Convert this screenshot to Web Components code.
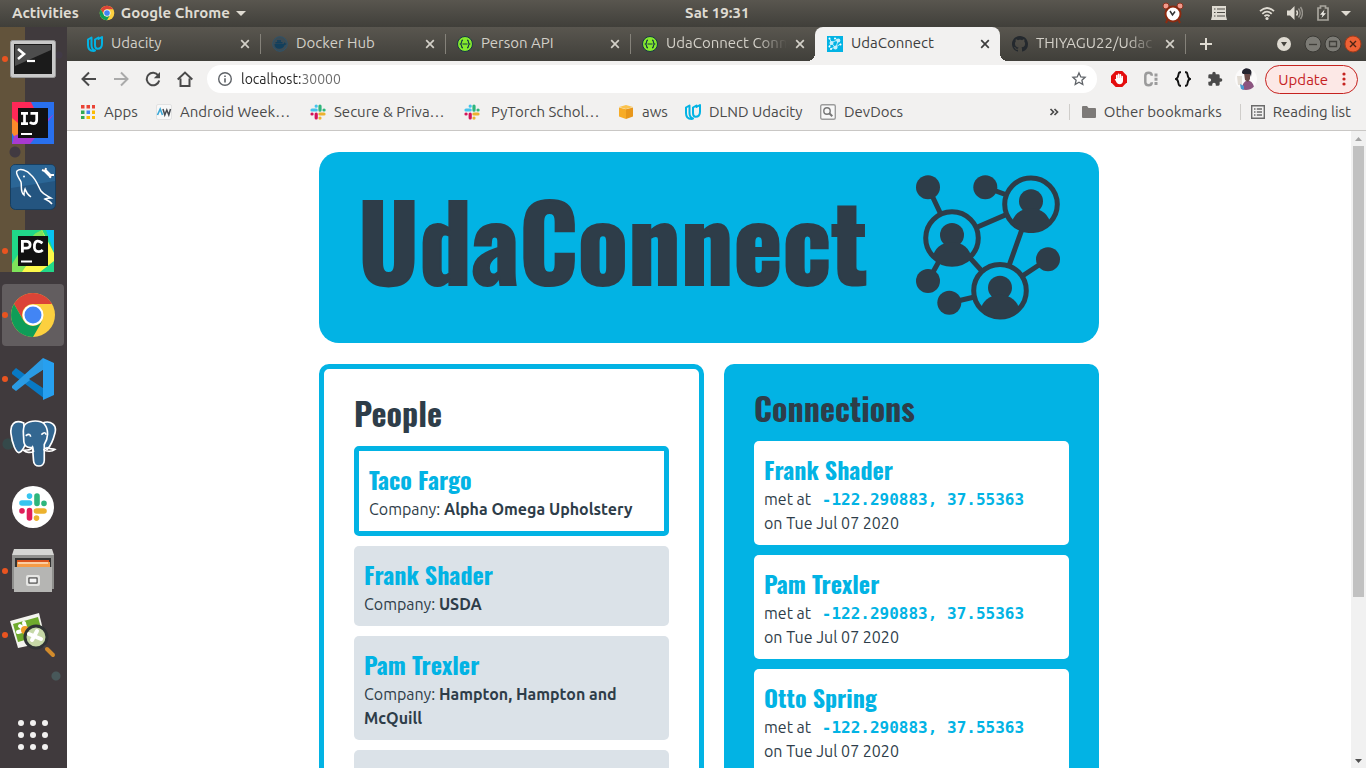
<!DOCTYPE html>
<html lang="en">
<head>
<meta charset="utf-8">
<title>UdaConnect</title>
<style>
  html, body { height: 100%; margin: 0; }
  body { font-family: Ubuntu, "Noto Sans", "Open Sans", sans-serif; font-size: 15px; overflow: hidden; }
</style>
</head>
<body>
<desktop-shell></desktop-shell>
<script>
const slackMark = `
  <g stroke-width="3.2" stroke-linecap="round" fill="none">
    <path stroke="#45c4ec" d="M2 6h4.2M6.2 2v.2"/><path stroke="#2eb67d" d="M10 2v4.2M14 6h.1"/>
    <path stroke="#ecb22e" d="M14 10H9.900M10 14v.1"/><path stroke="#d3145a" d="M6.200 14V10M2 10h.1"/>
  </g>`;
const chromeMark = `
  <circle cx="24" cy="24" r="22" fill="#fcd03f"/>
  <path fill="#db4437" d="M5 13A22 22 0 0 1 43 13H24a11 11 0 0 0-9.500 16.500z"/>
  <path fill="#0f9d58" d="M5 13A22 22 0 0 0 24 46l9.500-16.500a11 11 0 0 1-19 0z"/>
  <circle cx="24" cy="24" r="10.500" fill="#fff"/><circle cx="24" cy="24" r="8.500" fill="#4285f4"/>`;
const udacityMark = `<path fill="none" stroke="#02b3e4" stroke-width="2" stroke-linejoin="round" d="M4.500 1.500 1 3.500V9c0 4 2.500 6 5.500 6 1 0 1.500-.5 1.500-.5C5 13.500 4.500 11.500 4.500 9zM11.500 1.500 8 3.500V9c0 2.500.5 3.800 2.500 3.800 3 0 4.500-2 4.500-5V1L11.500 3z"/>`;
const swagger = `<circle cx="8" cy="8" r="7.500" fill="#85ea2d" stroke="#173647"/><path fill="none" stroke="#173647" stroke-width="1.200" d="M6 4.200c-2.500 0-.5 3-2.500 3.800C5.500 9 3.500 11.800 6 11.800M10 4.200c2.500 0 .5 3 2.500 3.800-2 1 0 3.800-2.500 3.800M5.500 8h5"/>`;
const caret = `<path fill="currentColor" d="M0 5h10l-5 5z"/>`;

const ICONS = {
  chrome: ['0 0 48 48', chromeMark],
  caret: ['0 0 10 15', caret],
  slack: ['0 0 16 16', slackMark],
  udacity: ['0 0 16 16', udacityMark],
  swagger: ['0 0 16 16', swagger],
  docker: ['0 0 16 16', `<circle cx="8" cy="8" r="7.300" fill="#3b4b54" stroke="#2f536a"/><path fill="#123f5c" d="M2.500 8h9c.3-1 .8-1.600 1.200-1.800l.8 1.300 1 .3c-.4 1-1.200 1-1.700 1-1 2.500-2.800 4-5.500 4-3.200 0-4.800-2-4.800-4.800zM3.500 6h7v1.500h-7zM5 4.300h4v1.400H5z"/>`],
  network: ['0 0 16 16', `<path fill="#02b3e4" d="M0 0h16v16H0z"/><path fill="none" stroke="#fff" stroke-width=".7" d="M2.500 2.500l2 4 6-2.500-2-1.500M11 5L9 11l4.500-3M4 12.500l4-1L4.500 7 2.500 10"/><g fill="#c8effa"><circle cx="11.300" cy="4.500" r="2"/><circle cx="4.500" cy="7" r="2"/><circle cx="8.500" cy="11.500" r="2"/></g><g fill="#fff"><circle cx="2.500" cy="2.500" r="1"/><circle cx="8" cy="2.500" r="1"/><circle cx="13.500" cy="8.500" r="1"/><circle cx="2.500" cy="10.500" r="1"/><circle cx="4" cy="13" r="1"/></g>`],
  github: ['0 0 16 16', `<path fill="#24292e" d="M8 0C3.580 0 0 3.580 0 8c0 3.540 2.290 6.530 5.470 7.590.4.070.55-.17.55-.38 0-.19-.01-.82-.01-1.490-2.010.37-2.530-.49-2.690-.94-.09-.23-.48-.94-.82-1.130-.28-.15-.68-.52-.01-.53.63-.01 1.080.58 1.230.82.72 1.210 1.870.87 2.330.66.07-.52.28-.87.51-1.070-1.780-.2-3.640-.89-3.640-3.950 0-.87.31-1.590.82-2.150-.08-.2-.36-1.020.08-2.120 0 0 .67-.21 2.200.82.64-.18 1.320-.27 2-.27s1.360.09 2 .27c1.530-1.040 2.200-.82 2.200-.82.44 1.100.16 1.920.08 2.120.51.56.82 1.270.82 2.150 0 3.070-1.870 3.750-3.650 3.950.29.25.54.73.54 1.480 0 1.070-.01 1.930-.01 2.200 0 .21.15.46.55.38A8.010 8.010 0 0 0 16 8c0-4.420-3.580-8-8-8z"/>`],
  close: ['0 0 10 10', `<path stroke="currentColor" stroke-width="1.700" d="M1.200 1.200l7.600 7.600M8.800 1.200L1.200 8.800"/>`],
  plus: ['0 0 14 14', `<path stroke="currentColor" stroke-width="2" d="M7 1v12M1 7h12"/>`],
  tabsearch: ['0 0 14 14', `<circle cx="7" cy="7" r="7" fill="#dfdbd2"/><path fill="#45433d" d="M4 5h6L7 9.500z"/>`],
  winmin: ['0 0 18 18', `<circle cx="9" cy="9" r="8" fill="#7c7b75" stroke="#3a3934"/><path stroke="#403f3a" stroke-width="1.300" d="M5 9.500h8"/>`],
  winmax: ['0 0 18 18', `<circle cx="9" cy="9" r="8" fill="#7c7b75" stroke="#3a3934"/><path fill="none" stroke="#403f3a" stroke-width="1.300" d="M5.500 6.500h7v5h-7z"/>`],
  winclose: ['0 0 18 18', `<circle cx="9" cy="9" r="8" fill="#ed6135" stroke="#a63b19"/><path stroke="#4a2415" stroke-width="1.400" d="M6 6l6 6M12 6l-6 6"/>`],
  back: ['0 0 16 16', `<path fill="none" stroke="#4a4a4a" stroke-width="2" d="M15 8H2.500M8 1.500L1.500 8 8 14.500"/>`],
  forward: ['0 0 16 16', `<path fill="none" stroke="#aaa" stroke-width="2" d="M1 8h12.500M8 1.500L14.500 8 8 14.500"/>`],
  reload: ['0 0 16 16', `<path fill="none" stroke="#4a4a4a" stroke-width="2" d="M13.300 4.500A6.300 6.300 0 1 0 14.200 9.500"/><path fill="#4a4a4a" d="M15 1v6.200H8.800z"/>`],
  home: ['0 0 16 16', `<path fill="none" stroke="#4a4a4a" stroke-width="2" d="M.7 8.500L8 1.600l7.300 6.900M3.500 7.500V15h9V7.500"/>`],
  info: ['0 0 14 14', `<circle cx="7" cy="7" r="6.300" fill="none" stroke="#5f6368" stroke-width="1.400"/><path stroke="#5f6368" stroke-width="1.600" d="M7 6.200v4.300M7 3.500v1.500"/>`],
  star: ['0 0 16 16', `<path fill="none" stroke="#5f6368" stroke-width="1.300" d="M8 1.900l1.800 4 4.300.4-3.200 2.900.9 4.300L8 11.300l-3.800 2.200.9-4.300L1.900 6.300l4.300-.4z"/>`],
  adblock: ['0 0 16 16', `<path fill="#e40d0d" d="M4.700 0h6.600L16 4.700v6.600L11.300 16H4.700L0 11.300V4.700z"/><path stroke="#fff" stroke-width="1.600" stroke-linecap="round" d="M5.800 8V4.500M7.600 7.500V3.300M9.400 7.500V3.800M11.200 8V5.500"/><path fill="#fff" d="M5 7h7v3c0 2-1.500 3.200-3.200 3.200-2 0-3-1-4-3.200L3.600 8.200 5 8z"/>`],
  cdots: ['0 0 16 16', `<path fill="none" stroke="#9b9b9b" stroke-width="2.500" d="M8.800 4.800c0-4-6.500-4-6.500 0v6.400c0 4 6.500 4 6.500 0"/><path fill="#9b9b9b" d="M11.500 2.500h3v3h-3zM11.500 6.700h3v3h-3zM11.500 11h3v3h-3z"/>`],
  braces: ['0 0 16 16', `<path fill="none" stroke="#111" stroke-width="1.900" d="M6 1.200H5C2.500 1.200 4.500 7 1 8c3.500 1 1.500 6.800 4 6.800h1M10 1.200h1c2.500 0 .5 5.800 4 6.800-3.500 1-1.500 6.800-4 6.800h-1"/>`],
  puzzle: ['0 0 24 24', `<path fill="#4a4a4a" d="M20.500 11H19V7a2 2 0 0 0-2-2h-4V3.500a2.500 2.500 0 0 0-5 0V5H4a2 2 0 0 0-2 2v3.800h1.500a2.700 2.700 0 0 1 0 5.400H2V20a2 2 0 0 0 2 2h3.800v-1.500a2.700 2.700 0 0 1 5.400 0V22H17a2 2 0 0 0 2-2v-4h1.500a2.500 2.500 0 0 0 0-5z"/>`],
  avatar: ['0 0 22 22', `<clipPath id="a"><circle cx="11" cy="11" r="11"/></clipPath><g clip-path="url(#a)"><path fill="#fbfafa" d="M0 0h22v22H0z"/><path fill="#e2dcd4" d="M2 8h5v9H3z"/><path fill="#8b5580" d="M7 22c0-6 2-9 6-9.500 4 .5 6 4 6.500 9.500z"/><path fill="#4a9ad0" d="M5 16l4 2v4H6z"/><path fill="#6b4a48" d="M9 5h6v6l-2 3-3-2z"/><path fill="#25242f" d="M7 5c0-6 9-6 9.500-1L16 9l-1-3H8z"/></g>`],
  kebab: ['0 0 4 14', `<g fill="#c5221f"><circle cx="2" cy="2" r="1.600"/><circle cx="2" cy="7" r="1.600"/><circle cx="2" cy="12" r="1.600"/></g>`],
  apps: ['0 0 16 16', `<path fill="#ea4335" d="M1 1h3.500v3.500H1zM6.500 1H10v3.500H6.500zM12 1h3v3.500h-3z"/><path fill="#34a853" d="M1 6.500h3.500V10H1zM1 12h3.500v3H1z"/><path fill="#4285f4" d="M6.500 6.500H10V10H6.500z"/><path fill="#fbbc04" d="M12 6.500h3V10h-3zM6.500 12H10v3H6.500zM12 12h3v3h-3z"/>`],
  aw: ['0 0 16 16', `<rect x=".5" y=".5" width="15" height="15" rx="1.500" fill="#f8f8f8" stroke="#e2e2e2"/><path fill="none" stroke="#3ba7d6" stroke-width="1.600" d="M1.500 11l2.700-6 2.300 6"/><path fill="none" stroke="#454a50" stroke-width="1.500" d="M7 5l1.800 6 2-5 2 5L14.500 5"/>`],
  aws: ['0 0 16 16', `<path fill="#f7ac27" d="M1 3.500l7 1.700V15l-7-2.500z"/><path fill="#e8971b" d="M15 3.500L8 5.200V15l7-2.500z"/><path fill="#fbc34e" d="M8 1l7 2-7 2-7-2z"/>`],
  devdocs: ['0 0 16 16', `<rect x=".7" y=".7" width="14.600" height="14.600" rx="1.500" fill="#f8f8f8" stroke="#9c9c9c" stroke-width="1.400"/><circle cx="7" cy="7" r="3.200" fill="none" stroke="#777" stroke-width="1.400"/><path stroke="#777" stroke-width="2" d="M9.300 9.300l3 3"/>`],
  more: ['0 0 10 10', `<path fill="none" stroke="#4a4a4a" stroke-width="1.700" d="M1.500 2L4.500 5l-3 3M5.500 2l3 3-3 3"/>`],
  folder: ['0 0 14 12', `<path fill="#7d7a78" d="M0 1a1 1 0 0 1 1-1h4l1.500 2H13a1 1 0 0 1 1 1v8a1 1 0 0 1-1 1H1a1 1 0 0 1-1-1z"/>`],
  reading: ['0 0 14 14', `<path fill="none" stroke="#6b6b6b" stroke-width="1.400" d="M.7.7h12.600v12.600H.7z"/><path stroke="#6b6b6b" stroke-width="1.300" d="M3 4h1.500M3 7h1.500M3 10h1.500M5.800 4H11M5.800 7H11M5.800 10H11"/>`],
  alarm: ['0 0 22 22', `<circle cx="4" cy="4" r="3" fill="#f29a8c" stroke="#8b3320"/><circle cx="18" cy="4" r="3" fill="#f29a8c" stroke="#8b3320"/><path stroke="#8b2a10" stroke-width="2" d="M6 17l-2 4M16 17l2 4"/><circle cx="11" cy="12" r="7.500" fill="#fff" stroke="#8b2a10" stroke-width="2"/><path fill="none" stroke="#333" stroke-width="1.500" d="M8 9l2.500 4L13 9.500"/>`],
  list: ['0 0 16 16', `<path fill="#dfdbd2" d="M1 1h14v10l1 4H0l1-4z"/><path stroke="#4e4c46" stroke-width="1.200" d="M3 4h1.500M3 7.500h1.500M3 11h1.500M6 4h8M6 7.500h8M6 11h8"/>`],
  wifi: ['0 0 16 16', `<g fill="none" stroke="#dfdbd2" stroke-width="1.800"><path d="M1 6.200q7-6.500 14 0M3.300 8.800q4.700-4.300 9.400 0M5.500 11.200q2.500-2.200 5 0"/></g><circle cx="8" cy="13.500" r="1.600" fill="#dfdbd2"/>`],
  volume: ['0 0 16 16', `<path fill="#dfdbd2" d="M0 5.500h3L7.500 1v14L3 10.500H0z"/><path fill="none" stroke="#dfdbd2" stroke-width="1.400" d="M9.500 5.500q2 2.500 0 5"/><path fill="none" stroke="#98958e" stroke-width="1.400" d="M11.500 3.500q3.400 4.500 0 9M13.500 2q4 6 0 12"/>`],
  battery: ['0 0 12 16', `<path fill="none" stroke="#a8a59d" stroke-width="1.700" d="M1 3h2.500V1h5v2H11v12H1z"/><path fill="#eeece6" d="M7.500 4.500L3 9.700h2.500L4.500 13 9 8.200H6.500z"/>`],
  terminal: ['0 0 46 38', `<rect x=".5" y=".5" width="45" height="37" rx="2" fill="#c9c9c9" stroke="#9a9a9a"/><rect x="4" y="4" width="38" height="30" fill="#1b1b1b"/><path fill="#4d4d4d" d="M5 5h36v5L5 26z"/><path fill="none" stroke="#fff" stroke-width="2.600" d="M8 9l6 5-6 5"/><path stroke="#fff" stroke-width="2.200" d="M17 21h8"/>`],
  intellij: ['0 0 42 42', `<path fill="#2970ee" d="M0 0h42v42H0z"/><path fill="#fe2857" d="M0 0h19l6 12L10 30 0 16z"/><path fill="#fb8a2a" d="M0 16l12 10L3 36l-3-5z"/><path fill="#a83ad0" d="M42 12L30 22 2 34l-2 8h18z"/><path fill="#111" d="M6 6h30v30H6z"/><path stroke="#fff" stroke-width="2" d="M9 32h11"/><path fill="none" stroke="#fff" stroke-width="2.700" d="M9 11.300h7M12.500 11v11M9 21.700h7M18.500 11.300h6.200V18q0 3.700-3.400 3.700-2 0-3.400-1.500"/>`],
  mysql: ['0 0 46 46', `<rect x=".5" y=".5" width="45" height="45" rx="5" fill="#245580" stroke="#173e5f"/><path fill="#2b6696" d="M5 1h36q4 0 4 4v12L1 24V5q0-4 4-4z"/><path fill="none" stroke="#fff" stroke-width="1.500" d="M21 33c-3-2-5-5-6-8-1 2-1 4-1 6-4-3-2-9-3-13C9 14 5 9 7 7c3-3 10-1 14 4 5 4 7 11 10 16 3 4 7 5 10 7-3 0-4 0-6 1 2 1 5 2 7 5"/><circle cx="14" cy="12.500" r="1" fill="#fff"/><path stroke="#fff" stroke-width="3.400" stroke-linecap="round" d="M35 6.500l5 5"/><path stroke="#fff" stroke-width="2" d="M32 6l3 1 1-3M40 14l1-3 3 0"/>`],
  pycharm: ['0 0 42 42', `<path fill="#21d789" d="M0 0h42v42H0z"/><path fill="#07c3f2" d="M34 0h8v22z"/><path fill="#fcf84a" d="M30 0l2 4 10 19v8L28 42H6l12-32z"/><path fill="#7ee35a" d="M0 34l18-28L30 0l3 8L10 42H0z"/><path fill="#21d789" d="M0 0h26L0 30z"/><path fill="#111" d="M6 6h30v30H6z"/><path stroke="#fff" stroke-width="2" d="M9 31.500h11"/><path fill="none" stroke="#fff" stroke-width="2.800" d="M10.400 22.500V11.300h4q3.700 0 3.700 3.400t-3.700 3.400h-4M30.500 13.200Q24 8.500 22.500 14.500 21.500 22 27 21.700q2 0 3.700-1.700"/>`],
  vscode: ['0 0 42 42', `<path fill="#0879c4" d="M0 14l4-4 29 21v10L0 16z"/><path fill="#2a9be4" d="M0 28L31 0v12L4 33l-4-3z"/><path fill="#27a0f0" d="M31 0l11 5v32l-11 5z"/><path fill="#403a3d" d="M31 12v18L17 21z"/>`],
  postgres: ['0 0 48 50', `<g fill="#336791" stroke="#fff" stroke-width="1.700"><path d="M14 4C4 0 0 6 1 15s5 21 9 19 5-6 6-10zM33 4c9-3 15 2 13 10s-5 14-8 17l-5-3z"/><path d="M16 5c5-4 15-4 19 0 5 6 4 15 0 21v16c0 8-11 8-11 0l-1-13c-5 1-9-1-9-8 0-6-2-13 2-16z"/><path fill="none" d="M34 31c4 3 9 2 12 0-2-1-7 0-9-2M14 32c2 2 7 3 10 1l-1-4c-2 4-6 2-9 3zM32 16q4-4 5 0M16 17q5-3 5 1"/></g>`],
  slackapp: ['0 0 42 42', `<circle cx="21" cy="21" r="21" fill="#fff"/><g stroke-width="5.600" stroke-linecap="round"><path stroke="#36c5f0" d="M10 17h7.500M17.500 10v.1"/><path stroke="#2eb67d" d="M25 10v7.500M32 17.500v-.1"/><path stroke="#ecb22e" d="M24.500 25H32M24.500 32v.1"/><path stroke="#e01e5a" d="M17.500 24.500V32M10 25v-.1"/></g>`],
  files: ['0 0 42 44', `<path fill="#d5d5d3" d="M2 0h38l2 6v14H0V6z"/><path fill="#8f8f8d" d="M0 6h42v34H0z"/><path fill="#333" d="M3 9h36v11H3z"/><path fill="#d9531e" d="M5 11h32v9H5z"/><path fill="#f59b46" d="M5 13h33v7H5z"/><path stroke="#fff" d="M6 14h30"/><path fill="#b5b5b3" d="M2 18h38v25H2z"/><rect x="15" y="27" width="12" height="9" rx="1" fill="none" stroke="#e6e6e4" stroke-width="2"/><path fill="#f5f5f5" stroke="#444" d="M17 29h8v5h-8z"/>`],
  images: ['0 0 46 46', `<path fill="#f4f4ef" d="M0 9L29 1l7 29-28 6z"/><path fill="#6fab2d" d="M3 12l25-7 5 18-25 7z"/><path stroke="#fff" stroke-width="4" stroke-linecap="round" d="M10 14l11 9M8 20l15-4M14 11l4 15"/><circle cx="15" cy="18" r="4" fill="#ef9c25"/><circle cx="26" cy="25" r="11" fill="#c5d8a7" stroke="#2f3335" stroke-width="3"/><path stroke="#fff" stroke-width="4" stroke-linecap="round" d="M19 22l12 5M22 28l5-9"/><path stroke="#444" stroke-width="3" d="M34 34l3 3"/><path stroke="#d28b2c" stroke-width="4" stroke-linecap="round" d="M37 37l6 6"/>`],
  grid: ['0 0 30 30', `<g fill="#f2f1f0"><circle cx="3" cy="3" r="3"/><circle cx="15" cy="3" r="3"/><circle cx="27" cy="3" r="3"/><circle cx="3" cy="15" r="3"/><circle cx="15" cy="15" r="3"/><circle cx="27" cy="15" r="3"/><circle cx="3" cy="27" r="3"/><circle cx="15" cy="27" r="3"/><circle cx="27" cy="27" r="3"/></g>`],
  people: ['916 175 144 145', `
    <defs><clipPath id="p"><circle r="28"/></clipPath>
    <g id="person"><circle r="26.300" fill="#02b3e4" stroke="#2e3d49" stroke-width="5"/><circle cy="-3" r="12"/><ellipse cy="20" rx="19" ry="16" clip-path="url(#p)"/></g></defs>
    <path fill="none" stroke="#2e3d49" stroke-width="5" d="M928 187l24 51 79-34-46-17M1031 204l-31 87 48-32M949 303l51-12-48-53-24 43"/>
    <g fill="#2e3d49"><circle cx="928" cy="187.300" r="12"/><circle cx="985.300" cy="187.300" r="12"/><circle cx="1048" cy="259.300" r="12"/><circle cx="928" cy="281" r="12"/><circle cx="949.300" cy="302.700" r="12"/>
    <use href="#person" x="952" y="238"/><use href="#person" x="1031" y="204.300"/><use href="#person" x="1000" y="290.700"/></g>`],
};

function define(name, html, setup) {
  const template = document.createElement('template');
  template.innerHTML = html;
  customElements.define(name, class extends HTMLElement {
    constructor() {
      super();
      this.attachShadow({ mode: 'open' }).append(template.content.cloneNode(true));
    }
    connectedCallback() { if (setup) setup(this, this.shadowRoot); }
  });
}

/* <ui-icon name w h> */
define('ui-icon', `<style>:host{display:inline-flex;flex:none}svg{display:block}</style><span></span>`, (el, root) => {
  const [box, body] = ICONS[el.getAttribute('name')];
  const w = el.getAttribute('w') || 16, h = el.getAttribute('h') || w;
  root.querySelector('span').innerHTML = `<svg viewBox="${box}" width="${w}" height="${h}" aria-hidden="true">${body}</svg>`;
});

define('top-panel', `
<style>
  :host { display: grid; grid-template-columns: 685px 1fr auto; align-items: center; box-sizing: border-box; height: 27px; padding-bottom: 1px; flex: none;
    background: linear-gradient(#59564f, #403f3a); color: #dfdbd2; font-weight: bold; font-size: 15px; line-height: 24px; }
  button { all: unset; display: flex; align-items: center; gap: 6px; }
  .left { display: flex; gap: 20px; padding-left: 12px; }
  .right { display: flex; align-items: center; padding-right: 15px; }
  .status { display: flex; align-items: center; gap: 12px; margin-left: 32px; }
  .battery { margin-left: 2px; }
  .list { margin-left: 27px; display: flex; }
</style>
<div class="left"><button>Activities</button><button><ui-icon name="chrome"></ui-icon>Google Chrome <ui-icon name="caret" w="10" h="15"></ui-icon></button></div>
<button>Sat 19:31</button>
<div class="right">
  <ui-icon name="alarm" w="22"></ui-icon><span class="list"><ui-icon name="list"></ui-icon></span>
  <button class="status" aria-label="System menu"><ui-icon name="wifi"></ui-icon><ui-icon name="volume"></ui-icon><ui-icon class="battery" name="battery" w="12" h="16"></ui-icon><ui-icon name="caret" w="10" h="15"></ui-icon></button>
</div>`);

define('dock-item', `
<style>
  :host { display: block; height: 64px; flex: none; }
  button { all: unset; box-sizing: border-box; position: relative; display: flex; align-items: center; justify-content: center;
    width: 62px; height: 62px; margin: 0 2px; border-radius: 4px; }
  :host([active]) button { background: #625d5f; }
  :host([running]) button::before { content: ""; position: absolute; left: 0; top: 28px; width: 6px; height: 6px; border-radius: 50%; background: #e95420; }
</style>
<button><slot></slot></button>`, (el, root) => root.querySelector('button').setAttribute('aria-label', el.getAttribute('label')));

define('app-dock', `
<style>
  :host { display: flex; flex-direction: column; box-sizing: border-box; width: 67px; flex: none; padding-top: 1px;
    background:
      radial-gradient(circle at 15px 125px, #413a41 5px, transparent 6px),
      radial-gradient(circle at 56px 649px, #48585a 4px, transparent 5px),
      radial-gradient(circle at 8px 417px, #35494a 5px, transparent 6px),
      radial-gradient(circle at 59px 28px, #413a46 3px, transparent 4px),
      linear-gradient(#62533b, #62533b) 0 0 / 25px 245px no-repeat,
      #403a3d; }
  .grow { flex: 1; }
</style>
<dock-item label="Terminal" running><ui-icon name="terminal" w="46" h="38"></ui-icon></dock-item>
<dock-item label="IntelliJ IDEA"><ui-icon name="intellij" w="42"></ui-icon></dock-item>
<dock-item label="MySQL Workbench"><ui-icon name="mysql" w="46"></ui-icon></dock-item>
<dock-item label="PyCharm" running><ui-icon name="pycharm" w="42"></ui-icon></dock-item>
<dock-item label="Google Chrome" running active><ui-icon name="chrome" w="48"></ui-icon></dock-item>
<dock-item label="Visual Studio Code" running><ui-icon name="vscode" w="42"></ui-icon></dock-item>
<dock-item label="pgAdmin"><ui-icon name="postgres" w="47" h="49"></ui-icon></dock-item>
<dock-item label="Slack"><ui-icon name="slackapp" w="42"></ui-icon></dock-item>
<dock-item label="Files" running><ui-icon name="files" w="42" h="44"></ui-icon></dock-item>
<dock-item label="Image Viewer" running><ui-icon name="images" w="46"></ui-icon></dock-item>
<div class="grow"></div>
<dock-item label="Show Applications"><ui-icon name="grid" w="30"></ui-icon></dock-item>`);

define('browser-tab', `
<style>
  :host { display: flex; align-items: center; box-sizing: border-box; flex: 0 1 185px; min-width: 0; height: 34px;
    padding: 0 10px 0 12px; gap: 8px; position: relative; color: #d3d0c8; font-size: 15px; }
  :host::after { content: ""; position: absolute; right: -1px; top: 7px; width: 1px; height: 20px; background: #85827a; }
  :host([active]) { background: #f2f1f0; color: #3d3d3d; border-radius: 8px 8px 0 0; z-index: 1; }
  :host([active])::after, :host([active])::before { content: ""; position: absolute; background: radial-gradient(circle at 0 0, transparent 8px, #f2f1f0 8px); width: 8px; height: 8px; top: 26px; left: -8px; }
  :host([active])::after { background: radial-gradient(circle at 100% 0, transparent 8px, #f2f1f0 8px); left: auto; right: -8px; }
  button { all: unset; display: flex; }
  .title { flex: 1; min-width: 0; overflow: hidden; white-space: nowrap; line-height: 20px; padding-bottom: 2px; }
  :host([long]) .title { -webkit-mask-image: linear-gradient(90deg, #000 75%, transparent); mask-image: linear-gradient(90deg, #000 75%, transparent); }
</style>
<slot name="icon"></slot><button class="title" role="tab"><slot></slot></button><button aria-label="Close tab"><ui-icon name="close" w="10"></ui-icon></button>`);

define('tab-strip', `
<style>
  :host { display: flex; align-items: center; height: 34px; padding: 0 4px 0 8px; background: linear-gradient(#59564f, #403f3a); color: #dfdbd2; }
  button { all: unset; display: flex; }
  .new { margin-left: 14px; }
  .controls { display: flex; align-items: center; gap: 2px; margin-left: auto; }
  .search { margin-right: 11px; }
</style>
<browser-tab><ui-icon slot="icon" name="udacity"></ui-icon>Udacity</browser-tab>
<browser-tab><ui-icon slot="icon" name="docker"></ui-icon>Docker Hub</browser-tab>
<browser-tab><ui-icon slot="icon" name="swagger"></ui-icon>Person API</browser-tab>
<browser-tab long><ui-icon slot="icon" name="swagger"></ui-icon>UdaConnect Conn</browser-tab>
<browser-tab active><ui-icon slot="icon" name="network"></ui-icon>UdaConnect</browser-tab>
<browser-tab long><ui-icon slot="icon" name="github"></ui-icon>THIYAGU22/Udac</browser-tab>
<button class="new" aria-label="New tab"><ui-icon name="plus" w="14"></ui-icon></button>
<div class="controls">
  <button class="search" aria-label="Search tabs"><ui-icon name="tabsearch" w="14"></ui-icon></button>
  <button aria-label="Minimize"><ui-icon name="winmin" w="18"></ui-icon></button>
  <button aria-label="Maximize"><ui-icon name="winmax" w="18"></ui-icon></button>
  <button aria-label="Close"><ui-icon name="winclose" w="18"></ui-icon></button>
</div>`);

define('nav-toolbar', `
<style>
  :host { display: flex; align-items: center; gap: 16px; height: 36px; padding: 0 8px 0 14px; background: #f2f1f0; }
  button { all: unset; display: flex; }
  form { flex: 1; min-width: 0; display: flex; align-items: center; gap: 9px; box-sizing: border-box; height: 28px; margin: 0 -2px 0 -2px; padding: 0 10px 0 11px; border-radius: 14px; background: #fff; }
  input { flex: 1; min-width: 0; border: 0; outline: 0; padding: 0; font: inherit; font-size: 14px; color: transparent;
    background: linear-gradient(90deg, #222 60px, #696969 60px); -webkit-background-clip: text; background-clip: text; }
  .avatar { margin: 0 -8px 0 -4px; }
  .update { box-sizing: border-box; height: 29px; padding: 0 11px 0 12px; gap: 14px; align-items: center; border: 1px solid #c5221f; border-radius: 15px; background: #fce8e6; color: #c5221f; font-size: 15px; }
</style>
<button aria-label="Back"><ui-icon name="back"></ui-icon></button>
<button aria-label="Forward"><ui-icon name="forward"></ui-icon></button>
<button aria-label="Reload"><ui-icon name="reload"></ui-icon></button>
<button aria-label="Home"><ui-icon name="home"></ui-icon></button>
<form><ui-icon name="info" w="14"></ui-icon><input aria-label="Address" value="localhost:30000"><button type="button" aria-label="Bookmark this page"><ui-icon name="star"></ui-icon></button></form>
<button aria-label="Ad blocker"><ui-icon name="adblock"></ui-icon></button>
<button aria-label="Extension"><ui-icon name="cdots"></ui-icon></button>
<button aria-label="Formatter"><ui-icon name="braces"></ui-icon></button>
<button aria-label="Extensions"><ui-icon name="puzzle"></ui-icon></button>
<button class="avatar" aria-label="Profile"><ui-icon name="avatar" w="22"></ui-icon></button>
<button class="update">Update<ui-icon name="kebab" w="4" h="14"></ui-icon></button>`);

define('bookmark-link', `
<style>
  :host { display: block; min-width: 0; }
  a { display: flex; align-items: center; gap: 8px; color: #4a4a4a; text-decoration: none; white-space: nowrap; }
</style>
<a href="#"><slot name="icon"></slot><span><slot></slot></span></a>`);

define('bookmarks-bar', `
<style>
  :host { display: flex; align-items: center; box-sizing: border-box; height: 34px; padding: 0 15px 4px 13px; background: #f2f1f0; border-bottom: 1px solid #c9c7c5; font-size: 15px; line-height: 28px; }
  nav { display: grid; grid-template-columns: 76px 154px 154px 154px 67px 135px auto; flex: 1; }
  .wide { margin-right: 3px; }
  .side { display: flex; align-items: center; gap: 10px; }
  .folder { margin: 0 8px 0 2px; }
  button { all: unset; display: flex; }
  i { width: 1px; height: 16px; background: #cfcdca; }
</style>
<nav aria-label="Bookmarks">
  <bookmark-link><ui-icon slot="icon" name="apps"></ui-icon>Apps</bookmark-link>
  <bookmark-link><ui-icon slot="icon" name="aw"></ui-icon>Android Week…</bookmark-link>
  <bookmark-link><ui-icon slot="icon" name="slack"></ui-icon>Secure &amp; Priva…</bookmark-link>
  <bookmark-link><ui-icon class="wide" slot="icon" name="slack"></ui-icon>PyTorch Schol…</bookmark-link>
  <bookmark-link><ui-icon slot="icon" name="aws"></ui-icon>aws</bookmark-link>
  <bookmark-link><ui-icon slot="icon" name="udacity"></ui-icon>DLND Udacity</bookmark-link>
  <bookmark-link><ui-icon slot="icon" name="devdocs"></ui-icon>DevDocs</bookmark-link>
</nav>
<div class="side">
  <button aria-label="More bookmarks"><ui-icon name="more" w="10"></ui-icon></button><i></i>
  <bookmark-link class="folder"><ui-icon slot="icon" name="folder" w="14" h="12"></ui-icon>Other bookmarks</bookmark-link><i></i>
  <bookmark-link><ui-icon slot="icon" name="reading" w="14"></ui-icon>Reading list</bookmark-link>
</div>`);

/* Headings of the UdaConnect page share one condensed face. */
const heading = `font-family: Oswald, "Open Sans Condensed", "Roboto Condensed", "Liberation Sans Narrow", "DejaVu Sans Condensed", sans-serif; font-weight: bold; margin: 0;`;

define('page-header', `
<style>
  :host { display: flex; align-items: center; justify-content: space-between; box-sizing: border-box; height: 191px; padding: 0 39px; border-radius: 20px; background: #02b3e4; color: #2e3d49; }
  h1 { ${heading} font-size: 104px; line-height: 150px; padding-bottom: 20px; -webkit-text-stroke: 2px #2e3d49; }
</style>
<h1>UdaConnect</h1><ui-icon name="people" w="144" h="145"></ui-icon>`);

define('person-card', `
<style>
  :host { display: block; margin-bottom: 10px; padding: 10px; border-radius: 5px; background: #dbe2e8; }
  :host([selected]) { border: 5px solid #02b3e4; background: #fff; }
  :host([loading]) { min-height: 60px; }
  :host([loading]) > * { display: none; }
  h3 { ${heading} font-size: 24px; line-height: 36px; color: #02b3e4; }
  p { margin: 0; line-height: 24px; }
</style>
<h3><slot name="name"></slot></h3><p>Company: <strong><slot></slot></strong></p>`, (el, root) => {
  if (el.hasAttribute('loading')) root.querySelectorAll('h3, p').forEach((part) => part.remove());
});

define('connection-card', `
<style>
  :host { display: block; margin-bottom: 10px; padding: 10px; border-radius: 5px; background: #fff; }
  h3 { ${heading} font-size: 24px; line-height: 36px; color: #02b3e4; }
  p { margin: 0; line-height: 24px; }
  code { font: bold 16px/20px "DejaVu Sans Mono", monospace; color: #02b3e4; margin-left: 7px; }
</style>
<h3><slot></slot></h3><p>met at <code>-122.290883, 37.55363</code><br>on Tue Jul 07 2020</p>`);

define('card-panel', `
<style>
  :host { display: block; padding: 30px; border-radius: 10px; flex: 1; }
  :host([outlined]) { border: 5px solid #02b3e4; background: #fff; }
  :host([filled]) { background: #02b3e4; }
  h2 { ${heading} font-size: 32px; line-height: 27px; margin-bottom: 20px; }
</style>
<h2><slot name="title"></slot></h2><slot></slot>`);

define('uda-page', `
<style>
  :host { display: block; flex: 1; min-width: 0; overflow: hidden; background: #fff; color: #2e3d49; font-size: 16px; }
  main { max-width: 780px; margin: 21px auto 0; }
  .columns { display: flex; align-items: flex-start; gap: 20px; margin-top: 21px; }
</style>
<main>
  <page-header></page-header>
  <div class="columns">
    <card-panel outlined>
      <span slot="title">People</span>
      <person-card selected><span slot="name">Taco Fargo</span>Alpha Omega Upholstery</person-card>
      <person-card><span slot="name">Frank Shader</span>USDA</person-card>
      <person-card><span slot="name">Pam Trexler</span>Hampton, Hampton and McQuill</person-card>
      <person-card loading></person-card>
    </card-panel>
    <card-panel filled>
      <span slot="title">Connections</span>
      <connection-card>Frank Shader</connection-card>
      <connection-card>Pam Trexler</connection-card>
      <connection-card>Otto Spring</connection-card>
    </card-panel>
  </div>
</main>`);

define('scroll-track', `
<style>
  :host { display: flex; flex-direction: column; width: 15px; flex: none; background: #f1f1f1; }
  .thumb { flex: 451; margin: 0 2px; background: #c1c1c1; }
  .rest { flex: 156; }
  svg { display: block; flex: none; }
</style>
<svg width="15" height="15" aria-hidden="true"><path fill="#a3a3a3" d="M4 10h7L7.500 6z"/></svg>
<div class="thumb"></div><div class="rest"></div>
<svg width="15" height="15" aria-hidden="true"><path fill="#505050" d="M4 6h7l-3.500 4z"/></svg>`);

define('desktop-shell', `
<style>
  :host { display: flex; flex-direction: column; height: 100vh; }
  .work, .view { display: flex; flex: 1; min-height: 0; }
  .window { display: flex; flex-direction: column; flex: 1; min-width: 0; }
</style>
<top-panel></top-panel>
<div class="work">
  <app-dock></app-dock>
  <div class="window">
    <tab-strip></tab-strip><nav-toolbar></nav-toolbar><bookmarks-bar></bookmarks-bar>
    <div class="view"><uda-page></uda-page><scroll-track></scroll-track></div>
  </div>
</div>`);
</script>
</body>
</html>
